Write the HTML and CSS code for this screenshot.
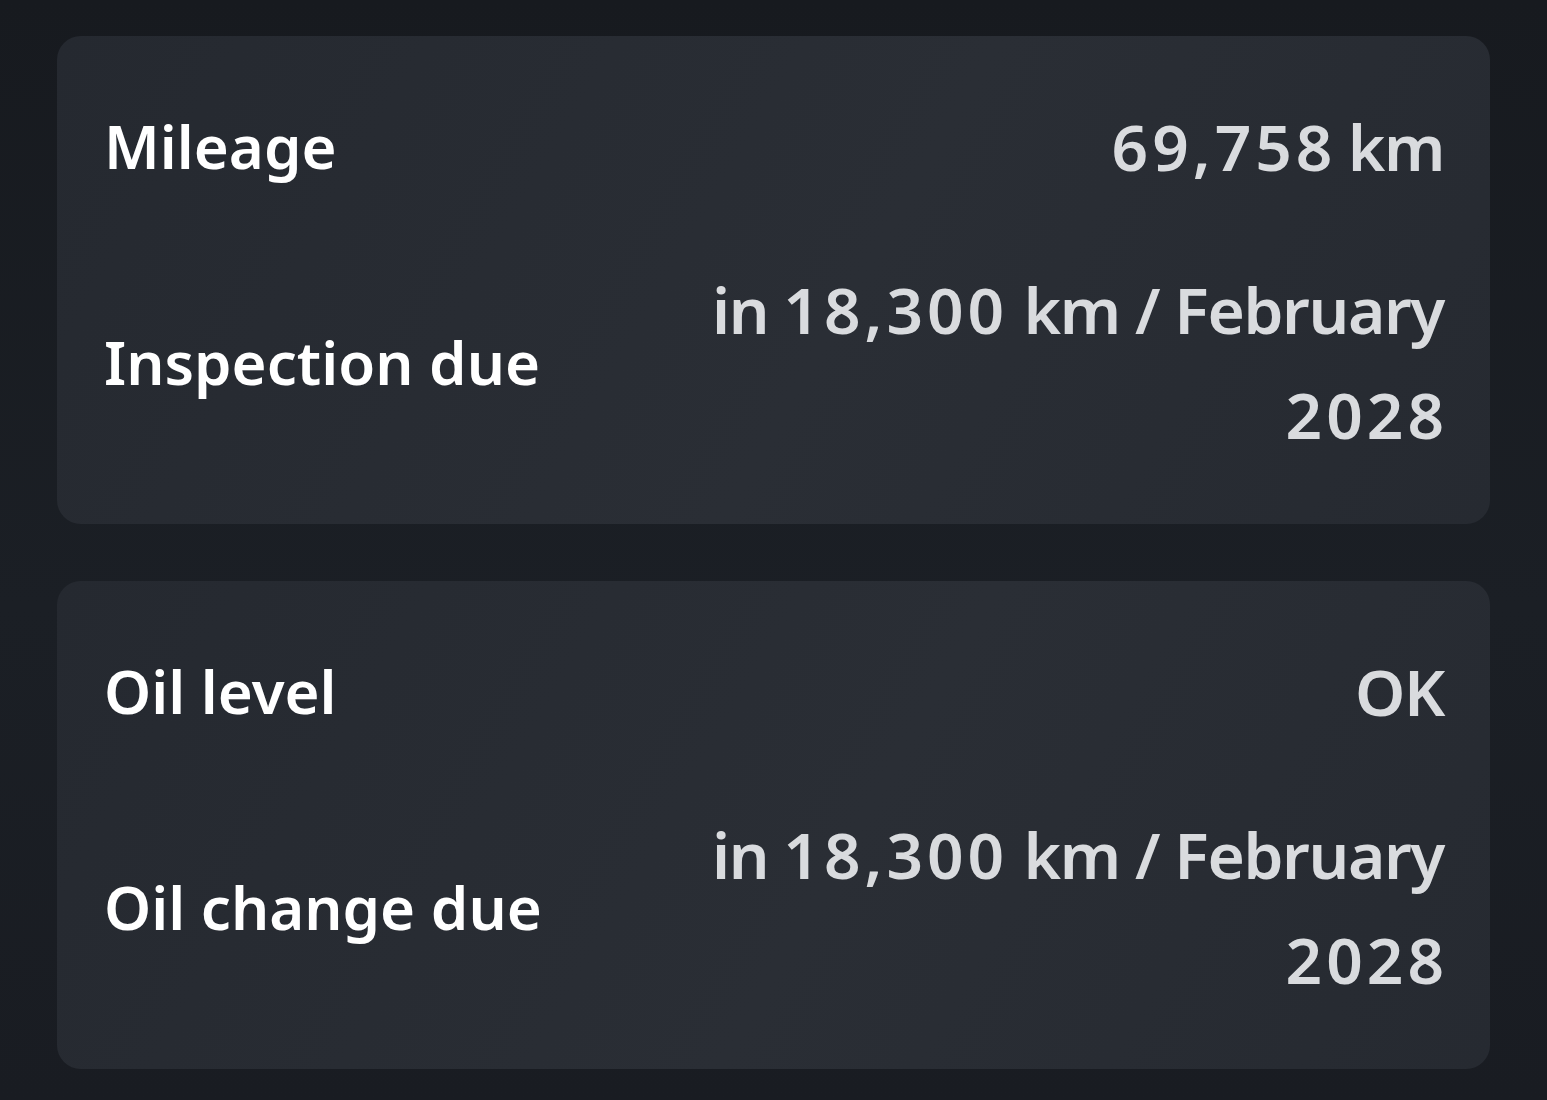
FILE: index.html
```html
<!DOCTYPE html>
<html lang="en">
<head>
  <meta charset="UTF-8">
  <meta name="viewport" content="width=device-width, initial-scale=1.0">
  <title>Vehicle status</title>
  <link rel="stylesheet" href="styles.css">
</head>
<body>
  <main class="status">
    <section class="card">
      <div class="row">
        <span class="label">Mileage</span>
        <span class="value"><span class="num">69,758</span> km</span>
      </div>
      <div class="row">
        <span class="label">Inspection due</span>
        <span class="value">in <span class="num">18,300</span> km / February <span class="num">2028</span></span>
      </div>
    </section>
    <section class="card">
      <div class="row">
        <span class="label">Oil level</span>
        <span class="value">OK</span>
      </div>
      <div class="row">
        <span class="label">Oil change due</span>
        <span class="value">in <span class="num">18,300</span> km / February <span class="num">2028</span></span>
      </div>
    </section>
  </main>
</body>
</html>
```

FILE: styles.css
```css
* {
  box-sizing: border-box;
}

body {
  margin: 0;
  height: 100vh;
  background: linear-gradient(180deg, #171a1f 0%, #1b1f25 55%, #191c22 100%);
  font-family: 'Noto Sans', 'Open Sans', sans-serif;
  font-weight: 600;
}

.status {
  display: flex;
  flex-direction: column;
  gap: 57px;
  padding: 36px 57px 0 57px;
}

.card {
  display: flex;
  flex-direction: column;
  gap: 58px;
  padding: 58px 46px 57px 47px;
  border-radius: 24px;
  background: linear-gradient(120deg, #252930 0%, #2a2e35 55%, #262a31 100%);
}

.row {
  display: flex;
  justify-content: space-between;
  align-items: center;
  gap: 40px;
  font-size: 60px;
  line-height: 105px;
}

.label {
  color: #ffffff;
  flex-shrink: 0;
}

.value {
  color: #d9dbde;
  text-align: right;
  max-width: 760px;
  font-size: 64px;
  letter-spacing: -1.4px;
}

.value .num {
  letter-spacing: 4px;
}

.value .num:last-child {
  margin-right: -4px;
}
```
